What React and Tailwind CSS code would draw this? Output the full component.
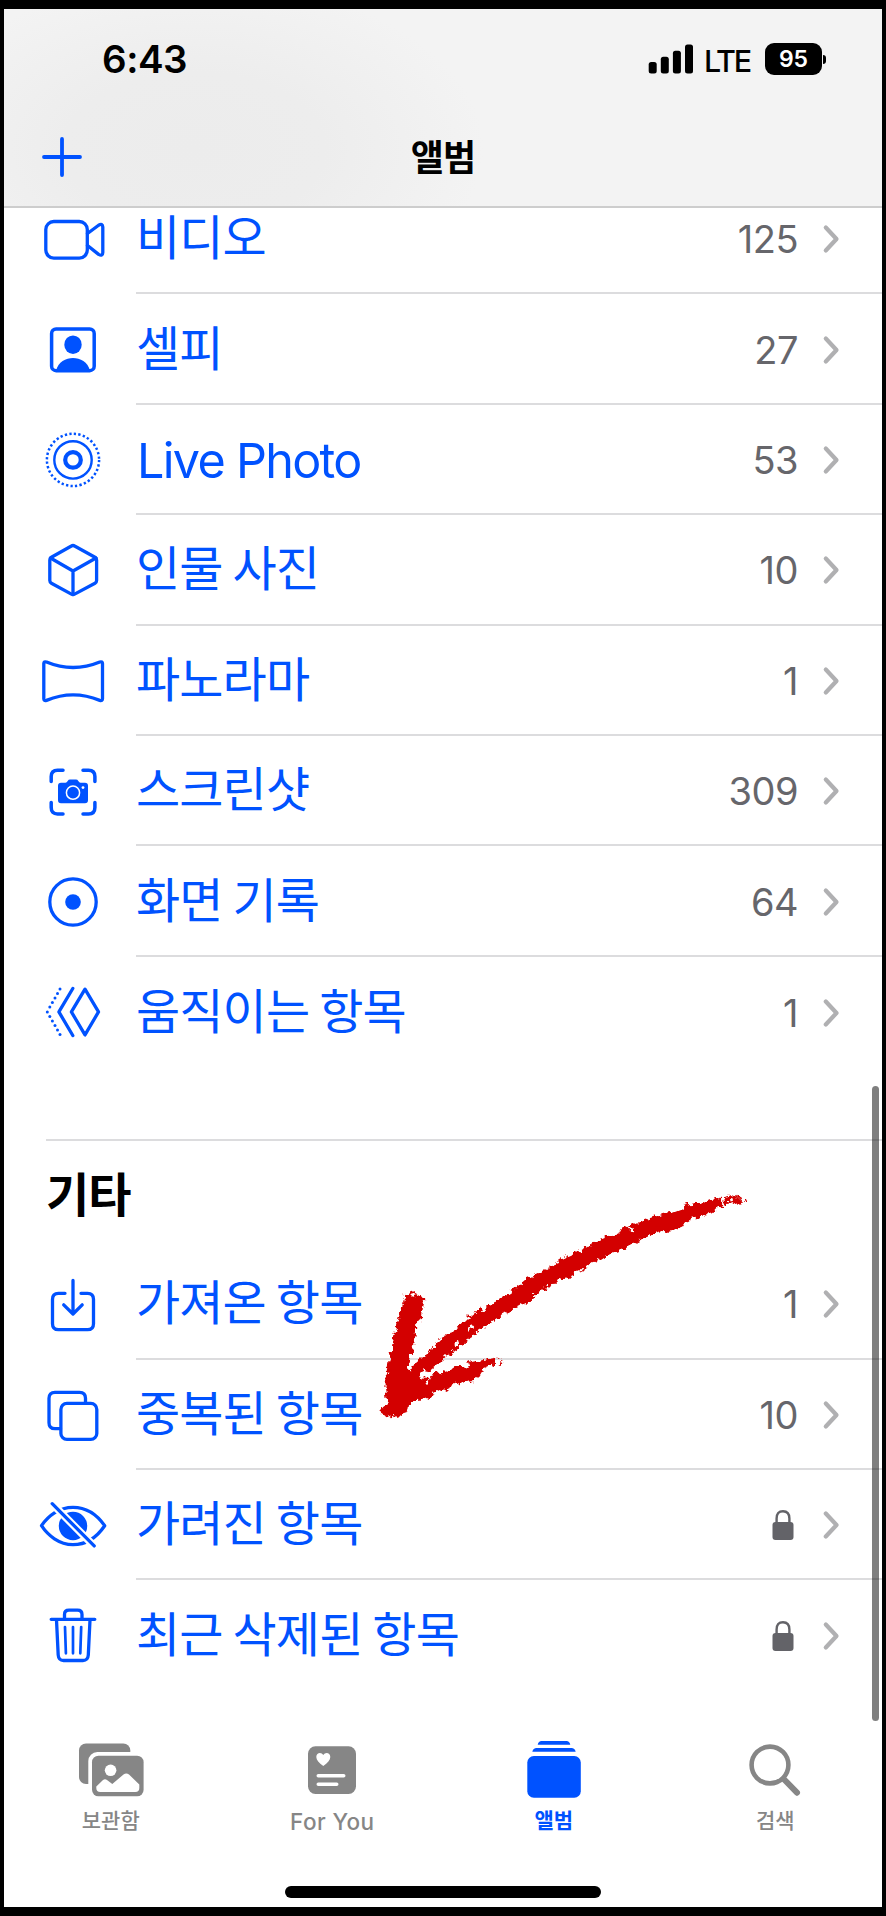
const line = { fill: 'none', stroke: 'currentColor', strokeWidth: 3.3, strokeLinecap: 'round', strokeLinejoin: 'round' };

function Icon({ children }) {
  return (
    <svg viewBox="0 0 72 60" className="h-[60px] w-[72px] shrink-0" aria-hidden="true">
      {children}
    </svg>
  );
}

const motionDots = [
  [23, 7], [20.5, 11.5], [18, 16], [15.4, 20.5], [12.8, 25], [10.3, 29.9],
  [12.8, 34.6], [15.4, 39], [18, 43.5], [20.5, 48], [23, 52.5],
];

const icons = {
  video: (
    <g {...line}>
      <rect x="8.8" y="12.5" width="41.5" height="36.6" rx="8" />
      <path d="M50.5 24.5 61.6 16.2Q65.6 14 65.8 18V43.5Q65.6 47.5 61.6 45.4L50.5 36.5" />
    </g>
  ),
  selfie: (
    <g>
      <rect x="14.6" y="8.9" width="42.6" height="41.8" rx="4.5" {...line} strokeWidth="3.5" />
      <ellipse cx="36" cy="24.7" rx="8.7" ry="9.3" fill="currentColor" />
      <path d="M19 51C21 41.5 29 37.9 36 37.9S51 41.5 53 51Z" fill="currentColor" />
    </g>
  ),
  live: (
    <g fill="none" stroke="currentColor">
      <circle cx="36" cy="29.9" r="7.8" strokeWidth="4.2" />
      <circle cx="36" cy="29.9" r="18.7" strokeWidth="2.4" />
      <circle cx="36" cy="29.9" r="26.1" strokeWidth="2.5" strokeDasharray="2.3 2.256" />
    </g>
  ),
  cube: (
    <g {...line}>
      <path d="M34.400 6Q36 5 37.600 6L58 17.200Q59.600 18.100 59.600 19.900V40.500Q59.600 42.300 58 43.200L37.600 54.100Q36 55 34.400 54.100L14.400 43.200Q12.800 42.300 12.800 40.500V19.900Q12.800 18.100 14.400 17.200Z" />
      <path d="M13.500 18 36 31 59 18M36 31V54.500" />
    </g>
  ),
  pano: (
    <path {...line} d="M6.800 12.500Q6.800 10.300 9.500 11Q36 22 62.800 11Q65.500 10.300 65.500 12.500V47.800Q65.500 50.200 62.800 49.400Q36 38.500 9.500 49.400Q6.800 50.200 6.800 47.800Z" />
  ),
  screenshot: (
    <g>
      <path {...line} strokeWidth="3.5" d="M14.200 20.500V15.500Q14.200 9.200 20.500 9.200H26M46 9.200H51.500Q57.900 9.200 57.900 15.500V20.500M57.900 41.500V46.500Q57.900 53 51.500 53H46M26 53H20.500Q14.200 53 14.200 46.500V41.500" />
      <path fill="currentColor" d="M24 21.800H28.500Q29.800 21.600 30.700 20Q31.500 18.600 33 18.600H39Q40.500 18.600 41.300 20Q42.200 21.600 43.500 21.800H48Q51 21.800 51 24.800V39.300Q51 42.300 48 42.300H24Q21 42.300 21 39.300V24.800Q21 21.800 24 21.800Z" />
      <circle cx="36" cy="31.700" r="6.600" fill="none" stroke="#fff" strokeWidth="1.500" />
      <circle cx="46" cy="26.600" r="1.400" fill="#fff" />
    </g>
  ),
  record: (
    <g>
      <circle cx="36" cy="30" r="23.200" {...line} />
      <circle cx="36" cy="30" r="7.800" fill="currentColor" />
    </g>
  ),
  motion: (
    <g>
      <path {...line} d="M48 7.200 61.500 29.900 48 52.900 34.400 29.900ZM35.800 6.500 21.900 29.900 35.800 53.500" />
      {motionDots.map(([x, y]) => (
        <circle key={y} cx={x} cy={y} r="1.500" fill="currentColor" />
      ))}
    </g>
  ),
  imported: (
    <g {...line}>
      <path d="M28 19.300H21.500Q15.500 19.300 15.500 25.300V49.700Q15.500 55.700 21.500 55.700H50.500Q56.500 55.700 56.500 49.700V25.300Q56.500 19.300 50.500 19.300H44" />
      <path d="M36 6.500V39.500M26.700 30.800 36 40 45.200 30.800" />
    </g>
  ),
  duplicate: (
    <g {...line}>
      <rect x="23.900" y="18.400" width="35.900" height="36" rx="6" />
      <path d="M23.500 43.700H18Q12 43.700 12 37.700V13.300Q12 7.300 18 7.300H42.500Q48.500 7.300 48.500 13.300V18" />
    </g>
  ),
  hidden: (
    <g>
      <path {...line} d="M4.500 30.700C11 21 22 12.300 36 12.300S61 21 67.700 30.700C61 40.500 50 49.600 36 49.600S11 40.500 4.500 30.700Z" />
      <circle cx="36" cy="31" r="14.200" fill="currentColor" />
      <path d="M11 4.500 61.500 55.500" stroke="#fff" strokeWidth="7.600" />
      <path {...line} d="M15.200 8.700 57.200 50.900" />
    </g>
  ),
  trash: (
    <g {...line}>
      <path d="M14.200 14.300H57.800M27.500 14V9.500Q27.500 5.200 32 5.200H40.500Q45 5.200 45 9.500V14" />
      <path d="M19.500 15 21.200 50Q21.600 55.500 26.500 55.500H46Q50.900 55.500 51.300 50L53 15" />
      <path strokeWidth="2.700" d="M28 22 28.900 48.300M36 22V48.300M44.200 22 43.300 48.300" />
    </g>
  ),
};

function Lock() {
  return (
    <svg viewBox="0 0 22 30" className="mr-1 h-[30px] w-[22px] text-[#636368]" aria-label="잠김">
      <rect x=".5" y="12" width="21" height="18" rx="3" fill="currentColor" />
      <path d="M4.600 13V8.500Q4.600 1.200 11 1.200T17.400 8.500V13" fill="none" stroke="currentColor" strokeWidth="2.400" />
    </svg>
  );
}

function Row({ icon, label, count, locked, latin, last, first }) {
  return (
    <div className={`flex h-[110.4px] shrink-0 pl-[33px] text-[#0052ff] ${first ? '-mt-6' : ''}`}>
      <div className="flex items-center"><Icon>{icons[icon]}</Icon></div>
      <div className={`ml-[27px] flex flex-1 items-center justify-between pr-[42px] ${last ? '' : 'border-b-2 border-[#dcdcde]'}`}>
        <span className={latin ? "pl-px pt-1 font-[Inter,sans-serif] text-[48.5px] leading-none tracking-[-1.7px]" : "pb-2 font-['Noto_Sans_CJK_KR',sans-serif] text-[48px] leading-none tracking-[-0.85px]"}>
          {label}
        </span>
        <span className="flex items-center gap-6 pt-0.5">
          {locked ? <Lock /> : <span className="font-[Inter,sans-serif] text-[38px] leading-none tracking-[-0.5px] text-[#66666b]">{count}</span>}
          <svg viewBox="0 0 18 30" className="h-[30px] w-[18px]" aria-hidden="true">
            <path d="M3.800 3.500 14.500 15 3.800 26.500" fill="none" stroke="#b0b0b2" strokeWidth="4.200" strokeLinecap="round" strokeLinejoin="round" />
          </svg>
        </span>
      </div>
    </div>
  );
}

const media = [
  { icon: 'video', label: '비디오', count: 125 },
  { icon: 'selfie', label: '셀피', count: 27 },
  { icon: 'live', label: 'Live Photo', count: 53, latin: true },
  { icon: 'cube', label: '인물 사진', count: 10 },
  { icon: 'pano', label: '파노라마', count: 1 },
  { icon: 'screenshot', label: '스크린샷', count: 309 },
  { icon: 'record', label: '화면 기록', count: 64 },
  { icon: 'motion', label: '움직이는 항목', count: 1 },
];

const others = [
  { icon: 'imported', label: '가져온 항목', count: 1 },
  { icon: 'duplicate', label: '중복된 항목', count: 10 },
  { icon: 'hidden', label: '가려진 항목', locked: true },
  { icon: 'trash', label: '최근 삭제된 항목', locked: true },
];

function Header() {
  return (
    <header className="relative z-10 h-[199px] shrink-0 border-b-2 border-[#cdcdcd] bg-[#f3f3f3] bg-[radial-gradient(ellipse_290px_170px_at_190px_140px,#ececec_0%,#ededed_45%,#f3f3f3_100%)] text-black">
      <div className="flex h-[100px] items-center justify-between pl-[98px] pr-[54px]">
        <span className="font-[Inter,sans-serif] text-[38.5px] font-semibold leading-none tracking-[-0.5px]">6:43</span>
        <div className="flex items-center">
          <svg viewBox="0 0 46 30" className="h-[30px] w-[46px]" aria-hidden="true">
            <rect x=".700" y="18" width="8" height="11.500" rx="2.500" />
            <rect x="12.800" y="12.700" width="8" height="16.800" rx="2.500" />
            <rect x="24.900" y="6.700" width="8" height="22.800" rx="2.500" />
            <rect x="37" y=".500" width="8" height="29" rx="2.500" />
          </svg>
          <span className="ml-[10px] mt-1 font-[Inter,sans-serif] text-[30.5px] font-medium leading-none tracking-[-2.2px]">LTE</span>
          <span className="ml-[15px] flex h-8 w-[57px] items-center justify-center rounded-[9px] bg-black font-[Inter,sans-serif] text-[23px] font-semibold leading-none text-white">95</span>
          <span className="ml-px mr-[2px] h-[9px] w-[3px] rounded-r-full bg-black" />
        </div>
      </div>
      <div className="grid h-[97px] grid-cols-3 items-center pb-0.5">
        <svg viewBox="0 0 40 40" className="ml-[38px] h-10 w-10" aria-hidden="true">
          <path d="M20 2V38M2 20H38" stroke="#0052ff" strokeWidth="3.800" strokeLinecap="round" />
        </svg>
        <h1 className="pb-1 text-center font-['Noto_Sans_CJK_KR',sans-serif] text-[36px] font-bold leading-none tracking-[-1px]">앨범</h1>
      </div>
    </header>
  );
}

const tabs = [
  {
    label: '보관함',
    art: (
      <g fill="currentColor">
        <rect x="4" y="3.400" width="51.300" height="40.600" rx="7" />
        <rect x="13.300" y="12" width="60" height="50" rx="9" fill="#fff" />
        <rect x="17" y="15.700" width="51.600" height="40.600" rx="6.500" />
        <circle cx="35.600" cy="30.300" r="5.800" fill="#fff" />
        <path fill="#fff" d="M21.300 46.500 28 40Q30 38.300 32 40L37.300 44 48.500 34.500Q51.300 32.500 54 34.500L64.300 44.500V48Q64.300 52 60.300 52H25.300Q21.300 52 21.300 48Z" />
      </g>
    ),
  },
  {
    label: 'For You',
    art: (
      <g>
        <rect x="12" y="6.300" width="48" height="47.700" rx="7.500" fill="currentColor" />
        <path fill="#fff" d="M27.300 26C23 23 20.300 20 20.300 17C20.300 12.500 25.400 11.600 27.300 15C29.200 11.600 34.300 12.500 34.300 17C34.300 20 31.600 23 27.300 26Z" />
        <path d="M22.300 35.700H47.700M22.300 44.300H40.700" stroke="#fff" strokeWidth="3.600" strokeLinecap="round" />
      </g>
    ),
  },
  {
    label: '앨범',
    active: true,
    art: (
      <g fill="currentColor">
        <rect x="9.300" y="16" width="53.500" height="41.700" rx="6.500" />
        <path d="M14.300 11.700Q15.300 8 18.500 8H53.500Q56.700 8 57.700 11.700ZM19.700 4.700Q20.500 1 23.500 1H48.500Q51.500 1 52.300 4.700Z" />
      </g>
    ),
  },
  {
    label: '검색',
    art: (
      <g fill="none" stroke="currentColor" strokeLinecap="round">
        <circle cx="31" cy="25" r="18.400" strokeWidth="4.600" />
        <path d="M44.700 39 58 52.700" strokeWidth="6" />
      </g>
    ),
  },
];

function TabBar() {
  return (
    <nav className="-mx-1 grid h-[106px] shrink-0 grid-cols-4">
      {tabs.map((t) => (
        <div key={t.label} className={`flex flex-col items-center ${t.active ? 'text-[#0052ff]' : 'text-[#868686]'}`}>
          <Icon>{t.art}</Icon>
          <span
            className={
              t.label === 'For You'
                ? 'mt-[10px] font-[Inter,sans-serif] text-[22.5px] font-medium leading-6 tracking-[0.4px]'
                : `mt-[7px] font-['Noto_Sans_CJK_KR',sans-serif] text-[21px] leading-6 ${t.active ? 'font-bold' : 'font-medium'}`
            }
          >
            {t.label}
          </span>
        </div>
      ))}
    </nav>
  );
}

function BrushArrow() {
  return (
    <svg viewBox="0 0 1240 810" preserveAspectRatio="none" className="pointer-events-none absolute left-[360px] top-[1170px] z-20 h-[270px] w-[416px]" aria-hidden="true">
      <defs>
        <filter id="chalk" x="-5%" y="-5%" width="110%" height="110%">
          <feTurbulence type="fractalNoise" baseFrequency="0.055" numOctaves="3" seed="8" result="noise" />
          <feDisplacementMap in="SourceGraphic" in2="noise" scale="30" xChannelSelector="R" yChannelSelector="G" />
        </filter>
      </defs>
      <g fill="#d30000" filter="url(#chalk)">
        <path stroke="#d30000" strokeWidth="13" strokeLinejoin="round" d="M1062 100 1050 96 985 111 930 132 890 141 830 162 760 196 715 214 660 245 605 270 550 308 500 332 460 366 400 406 340 436 300 474 240 514 210 549 178 572 162 600 190 602 240 564 290 528 340 488 385 454 440 420 490 394 540 354 600 321 660 294 720 256 790 228 840 200 890 179 940 173 990 141 1050 123Z" />
        <path d="M1040 92 1105 76 1142 92 1110 103 1078 108 1050 130Z" />
        <path stroke="#d30000" strokeWidth="9" strokeLinejoin="round" d="M137 376 160 368 187 384 180 440 160 480 152 540 137 602 167 609 178 632 210 620 270 604 330 583 398 568 398 580 358 598 340 628 290 636 240 658 190 684 145 687 138 724 90 740 66 724 86 698 79 655 87 600 98 545 112 470Z" />
        <circle cx="1130" cy="82" r="5" />
        <circle cx="1152" cy="96" r="4" />
        <path d="M412 563 428 590 420 590Z" />
      </g>
      <g fill="#fff" filter="url(#chalk)">
        <ellipse cx="200" cy="617" rx="13" ry="6" />
        <ellipse cx="202" cy="636" rx="7" ry="8" />
        <ellipse cx="328" cy="474" rx="9" ry="5" />
        <ellipse cx="290" cy="522" rx="5" ry="10" />
        <ellipse cx="810" cy="177" rx="6" ry="8" />
        <ellipse cx="1080" cy="96" rx="4" ry="10" />
        <ellipse cx="1107" cy="91" rx="8" ry="4" />
        <ellipse cx="160" cy="375" rx="7" ry="5" />
      </g>
    </svg>
  );
}

export default function App() {
  return (
    <div className="relative h-[1916px] w-[886px] overflow-hidden bg-black px-1 pt-[9px]">
      <div className="flex h-[1898px] flex-col overflow-hidden bg-white">
        <Header />
        <main className="flex h-[1532px] shrink-0 flex-col">
          {media.map((m, i) => (
            <Row key={m.label} {...m} first={i === 0} last={i === media.length - 1} />
          ))}
          <section className="mt-[72px] flex flex-col">
            <div className="ml-[42px] flex h-[110px] items-center border-t-2 border-[#dcdcde] pb-[7px]">
              <h2 className="font-['Noto_Sans_CJK_KR',sans-serif] text-[47px] font-bold leading-none tracking-[-1px] text-black">기타</h2>
            </div>
            {others.map((o, i) => (
              <Row key={o.label} {...o} last={i === others.length - 1} />
            ))}
          </section>
        </main>
        <TabBar />
        <div className="ml-[281px] mt-10 h-3 w-[316px] shrink-0 rounded-full bg-black" />
      </div>
      <div className="absolute left-[872px] top-[1086px] z-20 h-[635px] w-[7px] rounded-full bg-black/50" />
      <BrushArrow />
    </div>
  );
}
